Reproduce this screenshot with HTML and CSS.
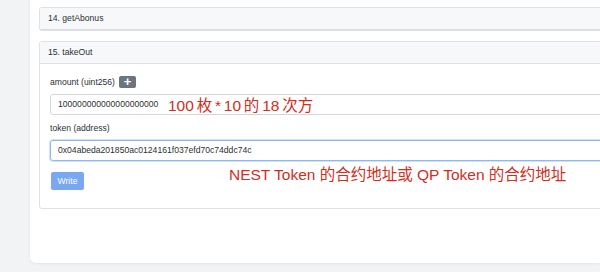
FILE: index.html
```html
<!DOCTYPE html>
<html lang="zh">
<head>
<meta charset="utf-8">
<link rel="stylesheet" href="styles.css">
</head>
<body>
<div class="panel">
  <div class="card collapsed">
    <div class="card-header">14. getAbonus</div>
  </div>
  <div class="card">
    <div class="card-header">15. takeOut</div>
    <div class="card-body">
      <div class="label-row">
        <span class="label">amount (uint256)</span>
        <span class="plus-btn">+</span>
      </div>
      <div class="field">
        <div class="input">100000000000000000000</div>
        <span class="note note-amount">100 枚 * 10 的 18 次方</span>
      </div>
      <div class="label-row second">
        <span class="label">token (address)</span>
      </div>
      <div class="field">
        <div class="input focused">0x04abeda201850ac0124161f037efd70c74ddc74c</div>
      </div>
      <div class="actions">
        <span class="write-btn">Write</span>
        <span class="note note-token">NEST Token 的合约地址或 QP Token 的合约地址</span>
      </div>
    </div>
  </div>
</div>
</body>
</html>
```

FILE: styles.css
```css
html, body {
  margin: 0;
  padding: 0;
}
body {
  width: 600px;
  height: 272px;
  overflow: hidden;
  background: #f2f3f5;
  font-family: "Liberation Sans", "Noto Sans CJK SC", sans-serif;
  color: #2b2f33;
}
.panel {
  margin-left: 30px;
  width: 570px;
  height: 263px;
  box-sizing: border-box;
  overflow: hidden;
  background: #ffffff;
  border-radius: 0 0 0 6px;
  box-shadow: 0 1px 3px rgba(0, 0, 0, 0.06);
  padding: 7px 0 0 9px;
}
.card {
  border: 1px solid #dfe1e4;
  border-radius: 3px;
  width: 580px;
  background: #fff;
  margin-bottom: 10px;
}
.card-header {
  height: 21px;
  line-height: 21px;
  padding-left: 8px;
  background: #f7f8f9;
  border-bottom: 1px solid #dfe1e4;
  font-size: 8.6px;
}
.collapsed .card-header {
  border-bottom-color: #d9dbde;
}
.card-body {
  padding: 12px 10px 20px 10px;
  height: 112px;
}
.label-row {
  display: flex;
  align-items: center;
  gap: 4px;
  height: 12px;
}
.label-row.second {
  margin-top: 7px;
}
.label {
  font-size: 8.6px;
  color: #2b2f33;
}
.plus-btn {
  display: flex;
  align-items: center;
  justify-content: center;
  width: 17px;
  height: 12px;
  background: #6c757d;
  color: #fff;
  border-radius: 2px;
  font-size: 13px;
  line-height: 12px;
  font-weight: bold;
}
.field {
  position: relative;
  margin-top: 6px;
}
.input {
  height: 19px;
  line-height: 19px;
  border: 1px solid #d3d7dc;
  border-radius: 3px;
  padding-left: 7px;
  font-size: 8.6px;
  color: #2b2f33;
  width: 580px;
}
.input.focused {
  border-color: #8fb8f0;
  box-shadow: 0 0 0 1px rgba(120, 170, 240, 0.35);
}
.note {
  position: absolute;
  color: #cf2e22;
  font-size: 15.5px;
  white-space: nowrap;
}
.note-amount {
  left: 118px;
  top: -1px;
  word-spacing: -1.5px;
}
.actions {
  position: relative;
  margin-top: 9px;
  height: 18px;
}
.write-btn {
  display: inline-block;
  margin-left: 1px;
  width: 33px;
  height: 18px;
  line-height: 18px;
  text-align: center;
  background: #79a8f2;
  color: #fff;
  font-size: 8.6px;
  border-radius: 2px;
}
.note-token {
  left: 179px;
  top: -8px;
}
```
